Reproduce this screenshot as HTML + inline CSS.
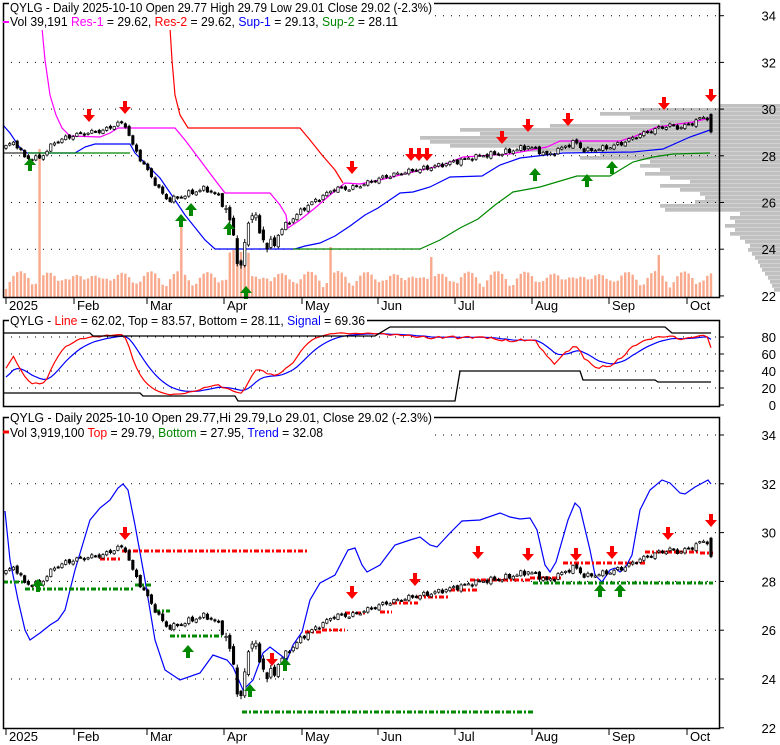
<!DOCTYPE html>
<html><head><meta charset="utf-8"><style>
html,body{margin:0;padding:0;background:#fff;}
svg{display:block;font-family:"Liberation Sans",Arial,sans-serif;}
</style></head><body>
<svg id="s" width="780" height="745" viewBox="0 0 780 745" xmlns="http://www.w3.org/2000/svg">
<rect width="780" height="745" fill="#fff"/>
<g id="bg"></g>
<g id="grid"></g>
<g id="plot"></g>
<g id="frames" fill="none" stroke="#000" stroke-width="1.5">
<rect x="3.5" y="3.5" width="716" height="294"/>
<rect x="3.5" y="320.5" width="716" height="86"/>
<rect x="3.5" y="417.5" width="716" height="311"/>
</g>
<g id="txt" font-size="12.5">
<rect x="9" y="0" width="425" height="30" fill="#fff"/>
<text x="10" y="12" textLength="422" lengthAdjust="spacingAndGlyphs">QYLG - Daily 2025-10-10 Open 29.77  High 29.79  Low 29.01  Close 29.02 (-2.3%)</text>
<text x="10" y="26" textLength="388" lengthAdjust="spacingAndGlyphs">Vol 39,191 <tspan fill="#f0f">Res-1</tspan> = 29.62, <tspan fill="#f00">Res-2</tspan> = 29.62, <tspan fill="#00f">Sup-1</tspan> = 29.13, <tspan fill="#080">Sup-2</tspan> = 28.11</text>
<line x1="3" y1="22" x2="9" y2="22" stroke="#f0f" stroke-width="2"/>
<rect x="9" y="313" width="358" height="14" fill="#fff"/>
<text x="10" y="325" textLength="355" lengthAdjust="spacingAndGlyphs">QYLG - <tspan fill="#f00">Line</tspan> = 62.02, Top = 83.57, Bottom = 28.11, <tspan fill="#00f">Signal</tspan> = 69.36</text>
<rect x="9" y="410" width="425" height="30" fill="#fff"/>
<text x="10" y="422" textLength="422" lengthAdjust="spacingAndGlyphs">QYLG - Daily 2025-10-10 Open 29.77,Hi 29.79,Lo 29.01, Close 29.02 (-2.3%)</text>
<text x="10" y="437" textLength="313" lengthAdjust="spacingAndGlyphs">Vol 3,919,100 <tspan fill="#f00">Top</tspan> = 29.79, <tspan fill="#080">Bottom</tspan> = 27.95, <tspan fill="#00f">Trend</tspan> = 32.08</text>
<line x1="3" y1="432" x2="9" y2="432" stroke="#f00" stroke-width="3"/>
</g>
</svg>
<script>
(function(){
var NS="http://www.w3.org/2000/svg";
function el(p,t,a,txt){var e=document.createElementNS(NS,t);for(var k in a)e.setAttribute(k,a[k]);if(txt!=null)e.textContent=txt;document.getElementById(p).appendChild(e);return e;}
function pl(p,pts,col,w,extra){var d=pts.map(function(q){return q[0]+","+q[1]}).join(" ");var a={points:d,fill:"none",stroke:col,"stroke-width":w||1};if(extra)for(var k in extra)a[k]=extra[k];return el(p,"polyline",a);}
var y1=function(v){return 15.7+(34-v)*23.35;};
var y3=function(v){return 435+(34-v)*24.4;};
var y2=function(v){return 405-v*0.85;};
var prof=[[104,60],[108,140],[112,180],[116,150],[120,120],[124,230],[128,320],[132,300],[136,360],[140,350],[144,330],[148,260],[152,180],[156,200],[160,130],[164,140],[168,120],[172,135],[176,110],[180,90],[184,120],[188,100],[192,80],[196,75],[200,85],[204,120],[208,115],[212,40],[216,50],[220,45],[224,55],[228,45],[232,50],[236,40],[240,35],[244,30],[248,32],[252,28],[256,25],[260,22],[264,20],[268,18],[272,15],[276,12],[280,10],[284,8],[288,6]];
prof.forEach(function(p){el("bg","rect",{x:780-p[1],y:p[0],width:p[1],height:3.7,fill:"#c0c0c0"});});
function dots(y,x0,x1){el("grid","line",{x1:x0,y1:y,x2:x1,y2:y,stroke:"#000","stroke-width":1,"stroke-dasharray":"1,7"});el("grid","line",{x1:719,y1:y,x2:724,y2:y,stroke:"#000","stroke-width":1});}
[34,32,30,28,26,24].forEach(function(v){dots(y1(v),11,719);});
el("grid","line",{x1:719,y1:y1(22),x2:724,y2:y1(22),stroke:"#000"});
[80,60,40,20].forEach(function(v){dots(y2(v),11,719);});
el("grid","line",{x1:719,y1:y2(0),x2:724,y2:y2(0),stroke:"#000"});
[34,32,30,28,26,24].forEach(function(v){dots(y3(v),11,719);});
el("grid","line",{x1:719,y1:y3(22),x2:724,y2:y3(22),stroke:"#000"});
function lab(y,t){el("txt","text",{x:776,y:y+5,"text-anchor":"end","font-size":"13",fill:"#000"},t);}
[34,32,30,28,26,24,22].forEach(function(v){lab(y1(v),""+v);lab(y3(v),""+v);});
[80,60,40,20,0].forEach(function(v){lab(y2(v),""+v);});
var months=[[6,"2025"],[74,"Feb"],[147,"Mar"],[224,"Apr"],[302,"May"],[378,"Jun"],[455,"Jul"],[532,"Aug"],[609,"Sep"],[687,"Oct"]];
months.forEach(function(m){
 [[298,310],[729,741]].forEach(function(b){el("grid","line",{x1:m[0],y1:b[0],x2:m[0],y2:b[0]+6,stroke:"#000"});el("txt","text",{x:m[0]+3,y:b[1],"font-size":"13"},m[1]);});
});
var kp=[[6,28.4],[15,28.6],[25,27.9],[40,27.9],[55,28.6],[75,28.9],[90,29.0],[105,29.1],[118,29.4],[126,29.3],[132,28.5],[140,27.9],[150,27.2],[160,26.5],[168,26.1],[178,26.2],[190,26.4],[205,26.6],[218,26.3],[228,25.5],[236,24.0],[241,23.1],[246,24.6],[252,25.8],[258,24.8],[266,24.3],[272,24.0],[280,24.8],[290,25.2],[305,25.8],[320,26.2],[335,26.6],[350,26.6],[365,26.8],[385,27.1],[405,27.3],[430,27.5],[460,27.8],[480,28.0],[500,28.1],[515,28.25],[528,28.4],[540,28.2],[548,28.0],[560,28.3],[575,28.6],[585,28.2],[600,28.3],[612,28.4],[625,28.6],[640,28.9],[660,29.2],[670,29.3],[680,29.2],[692,29.4],[705,29.7],[711,29.5]];
function pa(x){for(var i=1;i<kp.length;i++){if(x<=kp[i][0]){var a=kp[i-1],b=kp[i];return a[1]+(b[1]-a[1])*(x-a[0])/(b[0]-a[0]);}}return kp[kp.length-1][1];}
var N=190,X0=6,X1=711,dx=(X1-X0)/(N-1),C=[],xs=[];
var prev=28.3;
for(var i=0;i<N;i++){
 var x=X0+i*dx;xs.push(x);
 var vol=(x>225&&x<275)?3:1;
 var c=pa(x)+vol*(0.08*Math.sin(i*1.7)+0.05*Math.sin(i*3.1+1));
 var o=prev+vol*0.05*Math.sin(i*2.3+0.5);
 if(i==N-1){o=29.77;c=29.02;}
 var h=Math.max(o,c)+0.03+vol*0.04*Math.abs(Math.sin(i*1.3));
 var l=Math.min(o,c)-0.03-vol*0.04*Math.abs(Math.cos(i*0.9));
 C.push({o:o,c:c,h:h,l:l});prev=c;
}
function candles(yf){
 for(var i=0;i<N;i++){var k=C[i],x=xs[i];
  el("plot","line",{x1:x,y1:yf(k.h),x2:x,y2:yf(k.l),stroke:"#000","stroke-width":1});
  var t=Math.min(yf(k.o),yf(k.c)),b=Math.max(yf(k.o),yf(k.c));var hh=Math.max(b-t,1.2);
  if(k.c<k.o)el("plot","rect",{x:x-1.2,y:t,width:2.4,height:hh,fill:"#000",stroke:"#000","stroke-width":0.7});
  else el("plot","rect",{x:x-1.2,y:t,width:2.4,height:hh,fill:"#fff",stroke:"#000","stroke-width":0.7});
 }
}
for(var i=0;i<N;i++){var x=xs[i];var h=8+10*Math.abs(Math.sin(i*2.7))+8*Math.abs(Math.sin(i*0.37));
 if(x>228&&x<250)h+=25; if(Math.abs(x-38)<2)h=148; if(Math.abs(x-181)<2)h=70; if(Math.abs(x-331)<2)h=50;if(Math.abs(x-431)<2)h=40;if(Math.abs(x-659)<2)h=42;
 el("bg","rect",{x:x-1.2,y:297-h,width:2.4,height:h,fill:"#f9a98c"});}
pl("plot",[[42,28],[45,60],[50,95],[56,115],[62,128],[70,136],[100,137],[110,133],[118,128],[175,128],[185,140],[200,160],[215,180],[225,193],[270,193],[280,205],[286,215],[288,228],[300,220],[315,208],[330,195],[345,183],[360,184],[380,180],[400,175],[443,165],[463,157],[510,154],[547,147],[560,141],[620,141],[633,137],[657,127],[693,122],[710,118]],"#f0f",1.2);
pl("plot",[[170,28],[172,60],[175,95],[180,115],[188,128],[300,128],[310,140],[322,155],[335,170],[343,183]],"#f00",1.2);
pl("plot",[[3,125],[10,133],[20,148],[27,153],[75,153],[85,147],[95,144],[130,144],[135,153],[145,163],[160,178],[175,200],[185,215],[193,225],[205,240],[215,249],[295,249],[305,246],[320,243],[335,236],[350,226],[365,215],[378,208],[400,193],[413,192],[430,187],[450,177],[482,176],[500,165],[520,158],[563,153],[633,152],[663,149],[690,137],[710,130]],"#00f",1.2);
pl("plot",[[28,153],[130,153]],"#080",1.2);
pl("plot",[[293,249],[420,249],[440,240],[460,228],[478,219],[495,205],[513,192],[540,187],[577,176],[610,176],[633,162],[653,157],[673,154],[710,153]],"#080",1.2);
pl("plot",[[3,153],[27,153]],"#000",1);
candles(y1);
function down(x,y){el("plot","polygon",{points:[x-2,y-9,x+2,y-9,x+2,y-3,x+6,y-3,x,y+4,x-6,y-3,x-2,y-3].join(","),fill:"#f00"});}
function up(x,y){el("plot","polygon",{points:[x-2,y+9,x+2,y+9,x+2,y+3,x+6,y+3,x,y-4,x-6,y+3,x-2,y+3].join(","),fill:"#080"});}
[[89,118],[125,110],[352,170],[411,157],[419,157],[427,157],[502,140],[528,128],[568,122],[664,106],[711,98]].forEach(function(a){down(a[0],a[1]);});
[[30,162],[181,218],[191,207],[229,226],[246,290],[535,172],[587,178],[612,165]].forEach(function(a){up(a[0],a[1]);});
var raw=[];
for(var i=0;i<N;i++){var lo=1e9,hi=-1e9;for(var j=Math.max(0,i-19);j<=i;j++){lo=Math.min(lo,C[j].l);hi=Math.max(hi,C[j].h);}raw.push(hi>lo?100*(C[i].c-lo)/(hi-lo):50);}
var e=30,R=[],S=[],s=30;
for(var i=0;i<N;i++){e=e+(raw[i]-e)*0.25;var r=8+0.8*e;R.push(r);s=s+(r-s)*0.22;S.push(s);}
pl("plot",xs.map(function(x,i){return [x,y2(S[i])];}),"#00f",1.2);
pl("plot",xs.map(function(x,i){return [x,y2(R[i])];}),"#f00",1.2);
pl("plot",[[3,333],[90,333],[93,336],[375,336],[390,327],[665,327],[672,333],[711,333]],"#000",1.3);
pl("plot",[[3,393],[140,393],[143,396],[235,396],[238,401],[455,401],[460,371],[580,371],[583,380],[655,380],[658,382],[711,382]],"#000",1.3);
pl("plot",[[5,511],[10,560],[18,600],[25,630],[30,640],[40,633],[50,625],[58,620],[65,610],[75,570],[90,520],[100,508],[110,500],[118,488],[123,484],[128,490],[135,525],[145,580],[155,640],[165,670],[180,680],[200,673],[213,655],[227,660],[233,667],[243,690],[253,680],[263,653],[270,647],[287,660],[293,645],[302,632],[310,600],[320,583],[335,575],[348,550],[355,548],[362,565],[367,572],[380,565],[395,545],[410,540],[420,537],[430,545],[437,547],[450,533],[462,521],[480,520],[500,513],[510,517],[520,519],[530,518],[537,530],[545,565],[550,572],[556,562],[568,520],[575,503],[580,508],[590,550],[595,575],[602,582],[610,570],[615,568],[620,572],[625,568],[632,555],[640,510],[650,490],[662,480],[670,483],[680,493],[685,494],[695,487],[708,480],[711,484]],"#00f",1.2);
function dash(x0,x1,y,col){el("plot","line",{x1:x0,y1:y,x2:x1,y2:y,stroke:col,"stroke-width":3,"stroke-dasharray":"5,2,2,2"});}
[[3,25,582],[25,135,589],[135,152,585],[155,170,611],[170,222,636],[242,535,712],[533,713,583]].forEach(function(d){dash(d[0],d[1],d[2],"#080");});
[[100,120,559],[122,307,551],[305,322,632],[322,345,630],[345,366,613],[380,392,612],[392,418,603],[417,450,597],[450,477,590],[470,530,580],[530,563,578],[563,645,563],[645,700,552],[700,713,553]].forEach(function(d){dash(d[0],d[1],d[2],"#f00");});
candles(y3);
[[125,536],[272,662],[352,595],[415,582],[478,555],[528,557],[576,557],[612,555],[668,536],[711,523]].forEach(function(a){down(a[0],a[1]);});
[[38,583],[188,649],[250,688],[285,662],[600,588],[620,588]].forEach(function(a){up(a[0],a[1]);});
})();
</script>
</body></html>
